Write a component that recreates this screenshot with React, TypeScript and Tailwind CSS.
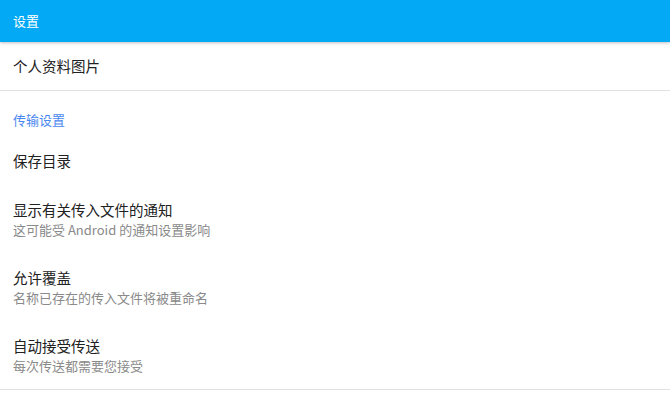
import React from "react";

const font = { fontFamily: '"Noto Sans CJK SC", "Noto Sans", sans-serif' };

function TwoLine({ title, sub }: { title: string; sub: string }) {
  return (
    <div className="flex flex-col px-[13px] py-[15px]">
      <div className="text-[14.5px] leading-[20px] text-[#212121]">{title}</div>
      <div className="mt-[2px] text-[13px] leading-[16px] text-[#8a8a8a]">{sub}</div>
    </div>
  );
}

export default function App() {
  return (
    <div className="w-[670px] h-[415px] bg-white overflow-hidden" style={font}>
      <div className="relative z-10 h-[42px] bg-[#03a9f4] flex items-center px-[13px] shadow-[0_1px_3px_rgba(0,0,0,0.25)]">
        <span className="text-[13px] leading-[16px] text-white">设置</span>
      </div>
      <div className="h-[49px] flex items-center px-[13px] border-b border-[#e2e2e2]">
        <span className="text-[14.5px] leading-[20px] text-[#212121]">个人资料图片</span>
      </div>
      <div className="px-[13px] pt-[21px] pb-[9px]">
        <span className="block text-[13px] leading-[16px] text-[#4a88f0]">传输设置</span>
      </div>
      <div className="h-[48px] flex items-center px-[13px]">
        <span className="text-[14.5px] leading-[20px] text-[#212121]">保存目录</span>
      </div>
      <TwoLine title="显示有关传入文件的通知" sub="这可能受 Android 的通知设置影响" />
      <TwoLine title="允许覆盖" sub="名称已存在的传入文件将被重命名" />
      <div className="border-b border-[#e2e2e2]">
        <TwoLine title="自动接受传送" sub="每次传送都需要您接受" />
      </div>
    </div>
  );
}
